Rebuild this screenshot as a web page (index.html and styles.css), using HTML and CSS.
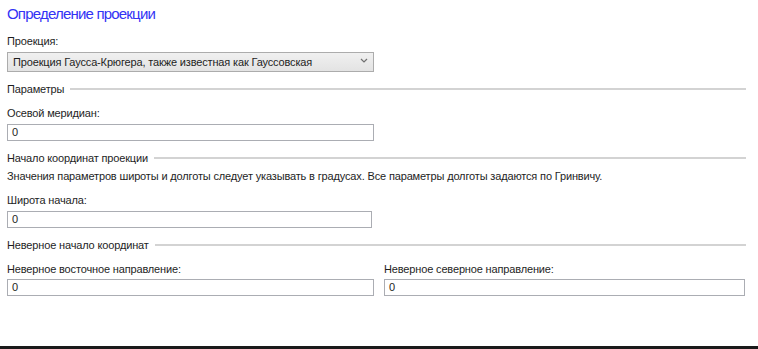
FILE: index.html
```html
<!DOCTYPE html>
<html lang="ru">
<head>
	<meta charset="UTF-8">
	<title>Определение проекции</title>
	<link rel="stylesheet" href="styles.css">
</head>
<body>
<div class="page">
	<div class="content">
		<h1 class="title">Определение проекции</h1>

		<div class="field">
			<label class="label">Проекция:</label>
			<div class="select">
				<span>Проекция Гаусса-Крюгера, также известная как Гауссовская</span>
				<svg class="chevron" width="8" height="5" viewBox="0 0 8 5">
					<path d="M1 1 L4 4 L7 1" fill="none" stroke="#707070" stroke-width="1.2"/>
				</svg>
			</div>
		</div>

		<!-- ПАРАМЕТРЫ -->
		<div class="group-header"><span>Параметры</span></div>
		<div class="field">
			<label class="label">Осевой меридиан:</label>
			<div class="input">0</div>
		</div>

		<!-- НАЧАЛО КООРДИНАТ -->
		<div class="group-header"><span>Начало координат проекции</span></div>
		<p class="note">Значения параметров широты и долготы следует указывать в градусах. Все параметры долготы задаются по Гринвичу.</p>
		<div class="field">
			<label class="label">Широта начала:</label>
			<div class="input narrow">0</div>
		</div>

		<!-- НЕВЕРНОЕ НАЧАЛО -->
		<div class="group-header"><span>Неверное начало координат</span></div>
		<div class="two-cols">
			<div class="field">
				<label class="label">Неверное восточное направление:</label>
				<div class="input wide">0</div>
			</div>
			<div class="field">
				<label class="label">Неверное северное направление:</label>
				<div class="input wide">0</div>
			</div>
		</div>
	</div>
	<div class="bottom-bar"></div>
</div>
</body>
</html>
```

FILE: styles.css
```css
* {
	box-sizing: border-box;
}

body {
	margin: 0;
	font-family: "Liberation Sans", Arial, sans-serif;
	font-size: 11px;
	letter-spacing: -0.15px;
	color: #1e1e1e;
	background: #fff;
}

.page {
	display: flex;
	flex-direction: column;
	min-height: 100vh;
}

.content {
	padding: 2px 12px 0 7px;
}

.title {
	margin: 0 0 7px;
	font-size: 15px;
	font-weight: normal;
	letter-spacing: -0.8px;
	line-height: 24px;
	color: #3333f5;
}

.field {
	display: flex;
	flex-direction: column;
}

.label {
	line-height: 16px;
	margin-bottom: 3px;
	white-space: nowrap;
}

/* COMBOBOX */
.select {
	display: flex;
	align-items: center;
	justify-content: space-between;
	width: 367px;
	height: 20px;
	padding: 0 5px 0 5px;
	border: 1px solid #acacac;
	background: linear-gradient(180deg, #f0f0f0, #e3e3e3);
	line-height: 16px;
	white-space: nowrap;
}

.chevron {
	margin-top: -3px;
}

/* GROUP HEADER WITH LINE */
.group-header {
	display: flex;
	align-items: center;
	gap: 6px;
	line-height: 16px;
	margin: 8px 0 8px;
	white-space: nowrap;
}

.group-header::after {
	content: "";
	flex: 1;
	height: 2px;
	background: #d3d3d3;
}

/* TEXT INPUTS */
.input {
	width: 367px;
	height: 17px;
	padding: 0 4px;
	border: 1px solid #abadb3;
	line-height: 15px;
	background: #fff;
}

.input.narrow {
	width: 365px;
}

.input.wide {
	width: 100%;
}

.field + .group-header {
	margin-top: 9px;
}

.note {
	margin: -6px 0 8px;
	line-height: 16px;
	white-space: nowrap;
}

.two-cols {
	display: grid;
	grid-template-columns: 367px 361px;
	gap: 10px;
	margin-top: 8px;
}

.two-cols .label {
	margin-bottom: 2px;
}

.bottom-bar {
	margin-top: auto;
	height: 3px;
	background: #1a1a1a;
}
```
